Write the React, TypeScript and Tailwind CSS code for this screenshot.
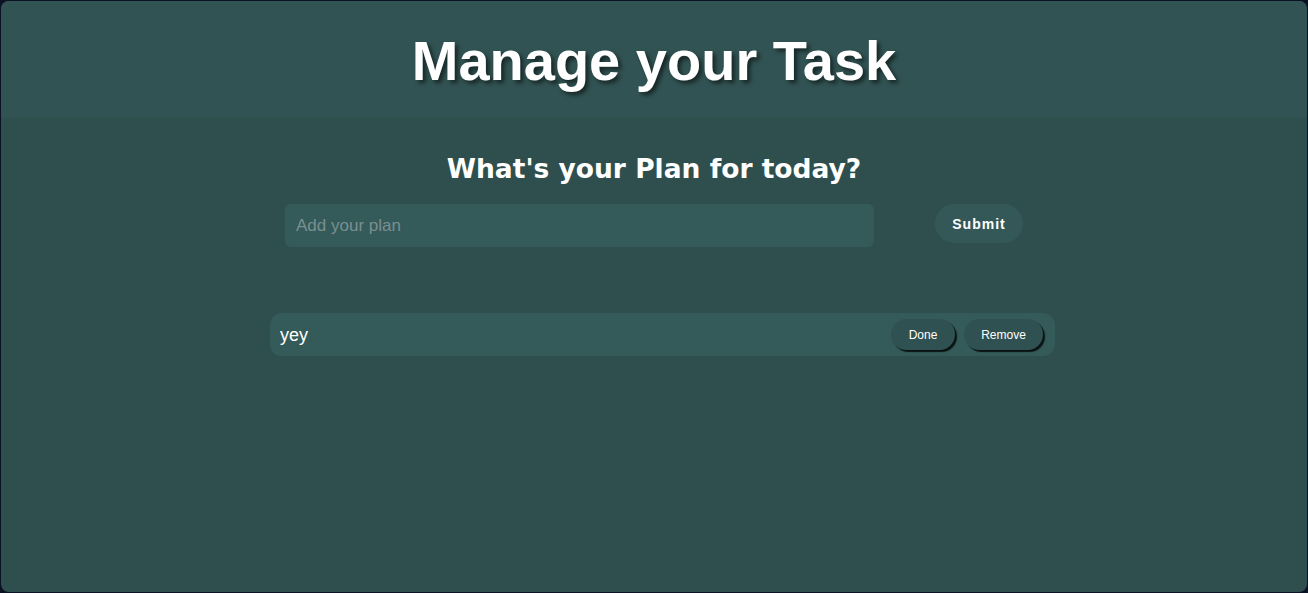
import { useState } from "react";

interface Task {
  id: number;
  text: string;
}

export default function App() {
  const [tasks] = useState<Task[]>([{ id: 1, text: "yey" }]);

  return (
    <div className="min-h-[593px] bg-[#0b1224] p-px">
      <div className="h-[591px] overflow-hidden rounded-lg bg-[#2f4f4f] font-['Liberation_Sans',Arial,sans-serif]">
        {/* Header */}
        <header className="flex h-[117px] items-center justify-center border-b border-[#31514f] bg-[#325353]">
          <h1 className="pt-[3px] text-[56px] font-bold leading-none text-white [text-shadow:3px_3px_4px_rgba(0,0,0,0.55)]">
            Manage your Task
          </h1>
        </header>

        {/* Form */}
        <section className="pt-[33px]">
          <h2 className="text-center font-['Comic_Sans_MS','DejaVu_Sans',cursive] text-[26.5px] font-bold leading-9 text-white">
            What's your Plan for today?
          </h2>
          <form className="mt-[17px] flex items-start justify-center gap-[61px]">
            <input
              type="text"
              placeholder="Add your plan"
              className="h-[43px] w-[589px] rounded-md bg-[#345a5a] px-[11px] text-[17px] text-white outline-none placeholder:text-[#7b8f8f]"
            />
            <button
              type="button"
              className="h-[39px] w-[88px] rounded-full bg-[#345858] text-sm font-bold tracking-[1px] text-white"
            >
              Submit
            </button>
          </form>
        </section>

        {/* Tasks */}
        <ul className="ml-[269px] mt-[66px] w-[785px] space-y-3">
          {tasks.map((task) => (
            <li
              key={task.id}
              className="flex h-[43px] items-center justify-between rounded-xl bg-[#345a5a] pl-[10px] pr-[12px]"
            >
              <span className="text-lg text-white">{task.text}</span>
              <div className="flex items-center gap-[9px]">
                <button
                  type="button"
                  className="h-[31px] w-[64px] rounded-full bg-[#2f5151] text-xs text-white shadow-[2px_2px_1px_rgba(0,0,0,0.8)]"
                >
                  Done
                </button>
                <button
                  type="button"
                  className="h-[31px] w-[79px] rounded-full bg-[#2f5151] text-xs text-white shadow-[2px_2px_1px_rgba(0,0,0,0.8)]"
                >
                  Remove
                </button>
              </div>
            </li>
          ))}
        </ul>
      </div>
    </div>
  );
}
